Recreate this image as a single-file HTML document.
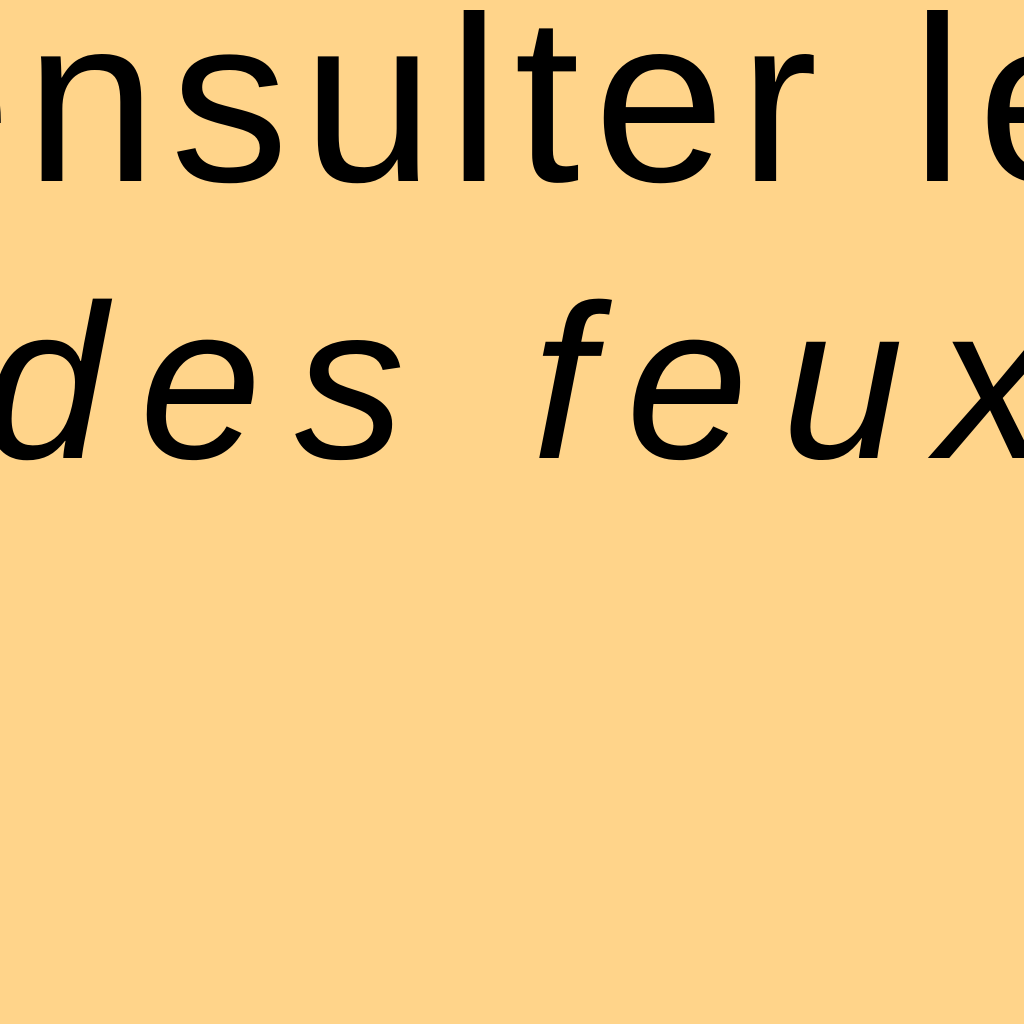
<!DOCTYPE html>
<html><head><meta charset="utf-8"><style>
html,body{margin:0;padding:0;width:1024px;height:1024px;overflow:hidden;background:#FFD48A;}
.t{position:absolute;font-family:"Liberation Sans",sans-serif;color:#000;white-space:nowrap;line-height:1;}
#a{left:-120px;top:-18px;font-size:236px;letter-spacing:14px;}
#b{left:-16px;top:272px;font-size:220px;font-style:italic;letter-spacing:33px;}
</style></head><body>
<div class="t" id="a">ensulter les</div>
<div class="t" id="b">des feux</div>
</body></html>
